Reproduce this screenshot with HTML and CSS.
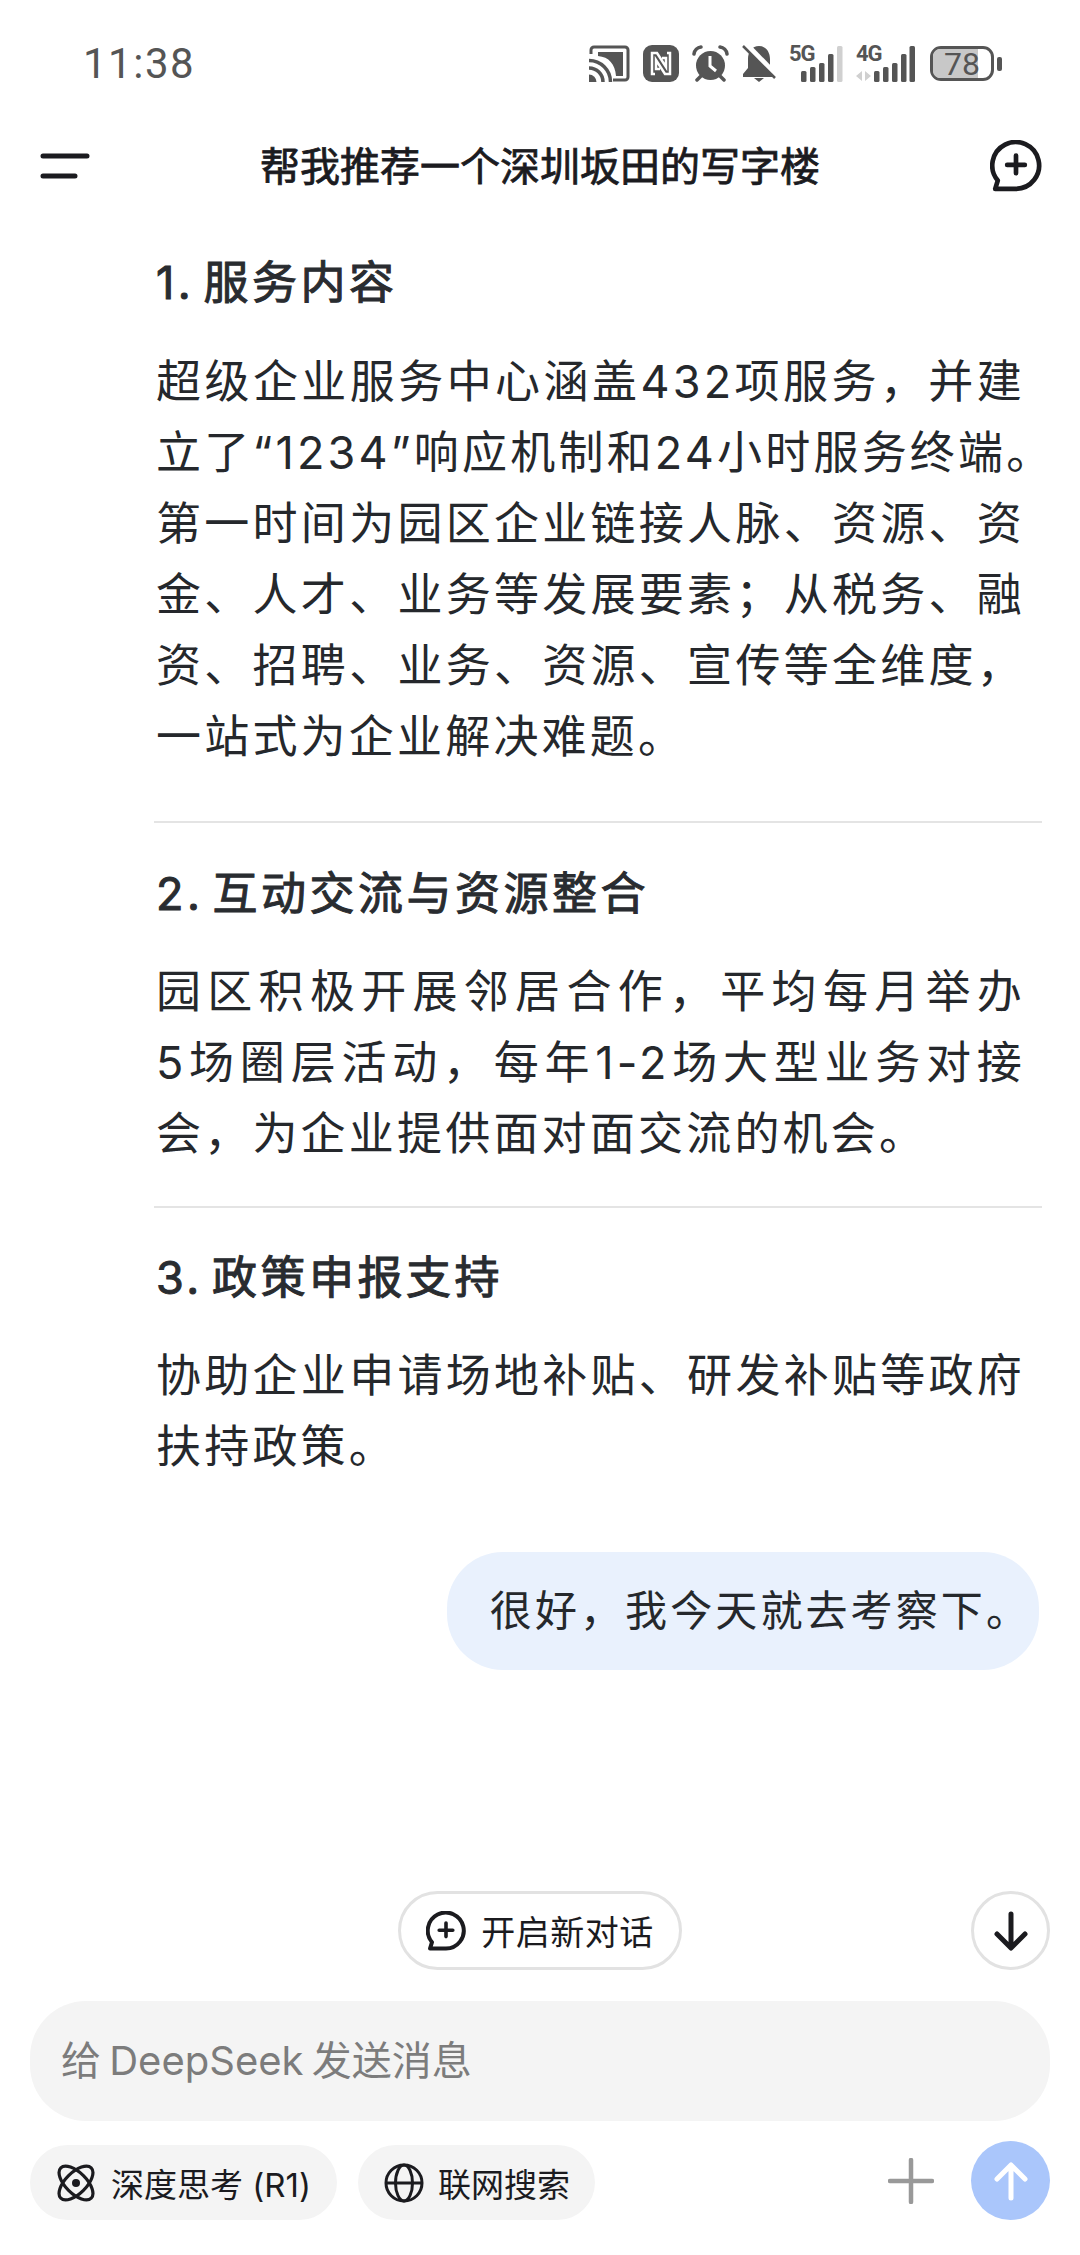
FILE: index.html
```html
<!DOCTYPE html>
<html lang="zh-CN">

<head>
    <meta charset="UTF-8">
    <meta name="viewport" content="width=device-width, initial-scale=1.0">
    <title>DeepSeek</title>
    <link rel="stylesheet" href="styles.css">
</head>

<body>

    <!-- Status bar -->
    <div class="status-bar">
        <span class="status-time">11:38</span>
        <div class="status-icons">
            <svg class="ic-cast" viewBox="0 0 41 37">
                <path d="M2 9V5a3 3 0 0 1 3-3h31a3 3 0 0 1 3 3v27a3 3 0 0 1-3 3H24" fill="none" stroke="#555" stroke-width="3"/>
                <path d="M9 7h25v24H27C26 19 20 12 9 11z" fill="#555"/>
                <path d="M0 15.500A21.500 21.500 0 0 1 21.500 37M0 23A14 14 0 0 1 14 37" fill="none" stroke="#555" stroke-width="3.500"/>
                <path d="M0 29.500a7.500 7.500 0 0 1 7.500 7.500H0z" fill="#555"/>
            </svg>
            <svg class="ic-nfc" viewBox="0 0 36 37">
                <rect width="36" height="37" rx="9" fill="#555"/>
                <path d="M12 29H9V8h5l9 14V13h-4M24 8h3v21h-5l-9-14v9h4" fill="none" stroke="#fff" stroke-width="2.500"/>
            </svg>
            <svg class="ic-alarm" viewBox="0 0 37 37">
                <circle cx="18.500" cy="20.500" r="14.500" fill="#555"/>
                <path d="M2 9a8 8 0 0 1 7-7M35 9a8 8 0 0 0-7-7M5 35l4-4M32 35l-4-4" fill="none" stroke="#555" stroke-width="3.500" stroke-linecap="round"/>
                <path d="M18 11v10l6 5" fill="none" stroke="#fff" stroke-width="3"/>
            </svg>
            <svg class="ic-bell" viewBox="0 0 34 37">
                <path d="M17 1c-7 0-11 6-11 13v9l-5 6v3h32v-3l-5-6v-9c0-7-4-13-11-13z" fill="#555"/>
                <path d="M12 33h10l-5 4z" fill="#555"/>
                <path d="M2 -3l32 33" stroke="#fff" stroke-width="5.500"/>
                <path d="M1 1l32 32" stroke="#555" stroke-width="2.500"/>
            </svg>
            <div class="signal">
                <span class="net-label">5G</span>
                <svg class="ic-bars-5g" viewBox="0 0 54 36">
                    <rect x="12" y="25" width="5.500" height="11" rx="1.500" fill="#555"/>
                    <rect x="21" y="21" width="5.500" height="15" rx="1.500" fill="#555"/>
                    <rect x="30" y="17" width="5.500" height="19" rx="1.500" fill="#555"/>
                    <rect x="39" y="8" width="5.500" height="28" rx="1.500" fill="#555"/>
                    <rect x="48" y="0" width="5.500" height="36" rx="1.500" fill="#d0d0d0"/>
                </svg>
            </div>
            <div class="signal">
                <span class="net-label">4G</span>
                <svg class="ic-bars-4g" viewBox="0 0 59 36">
                    <path d="M6 25l-6 5 6 5zM9 25l6 5-6 5z" fill="#d0d0d0"/>
                    <rect x="18" y="25" width="5.500" height="11" rx="1.500" fill="#555"/>
                    <rect x="27" y="21" width="5.500" height="15" rx="1.500" fill="#555"/>
                    <rect x="36" y="17" width="5.500" height="19" rx="1.500" fill="#555"/>
                    <rect x="45" y="8" width="5.500" height="28" rx="1.500" fill="#555"/>
                    <rect x="53.500" y="0" width="5.500" height="36" rx="1.500" fill="#555"/>
                </svg>
            </div>
            <div class="battery">
                <div class="battery-body">
                    <div class="battery-fill"></div>
                    <span class="battery-level">78</span>
                </div>
                <div class="battery-nub"></div>
            </div>
        </div>
    </div>

    <!-- Title bar -->
    <div class="title-bar">
        <svg class="ic-menu" viewBox="0 0 50 26">
            <path d="M3 3h44M3 23h32" fill="none" stroke="#1b1b1f" stroke-width="5" stroke-linecap="round"/>
        </svg>
        <h1>帮我推荐一个深圳坂田的写字楼</h1>
        <svg class="ic-chat-plus" viewBox="0 0 50 50">
            <path d="M5 47l2.500-8A22.500 22.500 0 1 1 25 47z" fill="none" stroke="#1b1b1f" stroke-width="4.500" stroke-linejoin="round"/>
            <path d="M25 15v17M16.500 24h17" fill="none" stroke="#1b1b1f" stroke-width="4.500" stroke-linecap="round"/>
        </svg>
    </div>

    <!-- Answer -->
    <div class="answer">
        <h3>1. 服务内容</h3>
        <p>
            <span class="fill">超级企业服务中心涵盖432项服务，并建</span>
            <span class="fill">立了“1234”响应机制和24小时服务终端。</span>
            <span class="fill">第一时间为园区企业链接人脉、资源、资</span>
            <span class="fill">金、人才、业务等发展要素；从税务、融</span>
            <span class="fill">资、招聘、业务、资源、宣传等全维度，</span>
            <span class="end">一站式为企业解决难题。</span>
        </p>
        <hr>
        <h3>2. 互动交流与资源整合</h3>
        <p>
            <span class="fill">园区积极开展邻居合作，平均每月举办</span>
            <span class="fill">5场圈层活动，每年1-2场大型业务对接</span>
            <span class="end">会，为企业提供面对面交流的机会。</span>
        </p>
        <hr class="sep-tight">
        <h3>3. 政策申报支持</h3>
        <p>
            <span class="fill">协助企业申请场地补贴、研发补贴等政府</span>
            <span class="end">扶持政策。</span>
        </p>
    </div>

    <div class="user-row">
        <div class="user-bubble">很好，我今天就去考察下。</div>
    </div>

    <!-- Bottom controls -->
    <div class="composer">
        <div class="float-row">
            <button class="new-chat">
                <svg class="ic-chat-small" viewBox="0 0 50 50">
                    <path d="M5 47l2.500-8A22.500 22.500 0 1 1 25 47z" fill="none" stroke="#1b1b1f" stroke-width="5" stroke-linejoin="round"/>
                    <path d="M25 15v17M16.500 24h17" fill="none" stroke="#1b1b1f" stroke-width="4.500" stroke-linecap="round"/>
                </svg>
                开启新对话
            </button>
            <button class="scroll-down">
                <svg viewBox="0 0 34 40">
                    <path d="M17 3v33M3 23l14 14 14-14" fill="none" stroke="#1b1b1f" stroke-width="5" stroke-linecap="round" stroke-linejoin="round"/>
                </svg>
            </button>
        </div>
        <div class="input-box">给 DeepSeek 发送消息</div>
        <div class="tool-row">
            <button class="chip chip-think">
                <svg class="ic-chip" viewBox="0 0 38 38">
                    <ellipse cx="19" cy="19" rx="10.500" ry="21.500" transform="rotate(-45 19 19)" fill="none" stroke="#1b1b1f" stroke-width="3.200"/>
                    <ellipse cx="19" cy="19" rx="10.500" ry="21.500" transform="rotate(45 19 19)" fill="none" stroke="#1b1b1f" stroke-width="3.200"/>
                    <circle cx="19" cy="19" r="4" fill="#1b1b1f"/>
                </svg>
                深度思考 (R1)
            </button>
            <button class="chip chip-search">
                <svg class="ic-chip" viewBox="0 0 40 40">
                    <circle cx="20" cy="20" r="18" fill="none" stroke="#1b1b1f" stroke-width="3"/>
                    <ellipse cx="20" cy="20" rx="8.500" ry="18" fill="none" stroke="#1b1b1f" stroke-width="3"/>
                    <path d="M2 20h36" stroke="#1b1b1f" stroke-width="3"/>
                </svg>
                联网搜索
            </button>
            <svg class="ic-plus" viewBox="0 0 46 46">
                <path d="M23 2v42M2 23h42" fill="none" stroke="#999" stroke-width="4.500" stroke-linecap="round"/>
            </svg>
            <button class="send">
                <svg viewBox="0 0 34 40">
                    <path d="M17 37V4M3 18L17 4l14 14" fill="none" stroke="#fff" stroke-width="5" stroke-linecap="round" stroke-linejoin="round"/>
                </svg>
            </button>
        </div>
    </div>

</body>

</html>
```

FILE: styles.css
```css
/* Theme */
:root {
    --ink: #1b1b1f;
    --body-ink: #25282c;
    --icon-gray: #555;
    --line: #e4e4e4;
    --soft-bg: #f4f4f4;
}

* {
    box-sizing: border-box;
}

body {
    font-family: Inter, "Noto Sans CJK SC", sans-serif;
    background: #fff;
    color: var(--body-ink);
    margin: 0;
    width: 1080px;
    height: 2255px;
    overflow: hidden;
    display: flex;
    flex-direction: column;
}

button {
    font-family: inherit;
    border: none;
    padding: 0;
    color: var(--ink);
}

/* Status bar */
.status-bar {
    height: 126px;
    padding: 45px 78px 0 83px;
    display: flex;
    justify-content: space-between;
    align-items: flex-start;
}

.status-time {
    font-family: Roboto, sans-serif;
    font-size: 42px;
    line-height: 38px;
    letter-spacing: 1.5px;
    color: var(--icon-gray);
}

.status-icons {
    display: flex;
    align-items: flex-start;
    gap: 13px;
}

.status-icons svg {
    display: block;
}

.ic-cast { width: 41px; height: 37px; }
.ic-nfc { width: 36px; height: 37px; }
.ic-alarm { width: 37px; height: 37px; }
.ic-bell { width: 34px; height: 37px; }
.ic-bars-5g { width: 54px; height: 36px; }
.ic-bars-4g { width: 59px; height: 36px; }

.signal {
    position: relative;
    margin-top: 1px;
}

.net-label {
    position: absolute;
    left: 0;
    top: -3px;
    font-family: Roboto, sans-serif;
    font-size: 22px;
    line-height: 22px;
    font-weight: 700;
    letter-spacing: -1px;
    color: var(--icon-gray);
}

.battery {
    display: flex;
    align-items: center;
    gap: 3px;
    margin: 1px 0 0 2px;
}

.battery-body {
    position: relative;
    width: 64px;
    height: 35px;
    border: 3.500px solid var(--icon-gray);
    border-radius: 11px;
    display: flex;
    align-items: center;
    justify-content: center;
}

.battery-fill {
    position: absolute;
    left: 0;
    top: 0;
    bottom: 0;
    width: 78%;
    border-radius: 7px 0 0 7px;
    background: #c8c8c8;
}

.battery-level {
    position: relative;
    font-family: Roboto, sans-serif;
    font-size: 32px;
    line-height: 28px;
    color: var(--icon-gray);
}

.battery-nub {
    width: 5px;
    height: 14px;
    border-radius: 2px;
    background: var(--icon-gray);
}

/* Title bar */
.title-bar {
    height: 80px;
    padding: 0 38px 0 40px;
    display: flex;
    align-items: center;
    justify-content: space-between;
}

.title-bar h1 {
    margin: 0;
    padding-bottom: 5px;
    font-size: 40px;
    font-weight: 400;
    -webkit-text-stroke: 0.8px var(--ink);
    color: var(--ink);
}

.ic-menu {
    width: 50px;
    height: 26px;
}

.ic-chat-plus {
    width: 52px;
    height: 52px;
}

/* Answer */
.answer {
    padding: 41px 38px 0 154px;
}

.answer h3 {
    margin: 0 0 0 2px;
    font-size: 45px;
    line-height: 72px;
    font-weight: 400;
    -webkit-text-stroke: 1px #292c30;
    letter-spacing: 3.5px;
    word-spacing: -7px;
    color: #292c30;
}

.answer p {
    margin: 26.5px 0 0 2px;
    font-size: 45px;
    line-height: 71px;
    letter-spacing: 3.2px;
    white-space: nowrap;
}

.answer p span {
    display: block;
}

/* lines stretch to the column edge, the closing line does not */
.answer p .fill {
    width: 869px;
    text-align: justify;
    text-align-last: justify;
}

.answer hr {
    border: none;
    height: 2px;
    background: var(--line);
    margin: 49px 0 35px;
}

.answer hr.sep-tight {
    margin: 36.5px 0 34px;
}

/* User message */
.user-row {
    display: flex;
    justify-content: flex-end;
    padding: 70px 41px 0 0;
}

.user-bubble {
    height: 118px;
    padding: 0 8px 0 43px;
    border-radius: 56px;
    background: #e9f1fd;
    font-size: 42px;
    letter-spacing: 3.1px;
    line-height: 118px;
}

/* Bottom controls */
.composer {
    margin-top: auto;
    padding: 0 30px 35px;
}

.float-row {
    display: grid;
    grid-template-columns: 1fr auto 1fr;
    align-items: center;
    height: 79px;
}

.new-chat {
    grid-column: 2;
    height: 79px;
    width: 284px;
    border: 3px solid #e2e2e2;
    border-radius: 40px;
    background: #fff;
    font-size: 34px;
    letter-spacing: 0.5px;
    display: flex;
    align-items: center;
    justify-content: center;
    gap: 15px;
}

.ic-chat-small {
    width: 40px;
    height: 40px;
}

.scroll-down {
    grid-column: 3;
    justify-self: end;
    width: 79px;
    height: 79px;
    border: 3px solid #e2e2e2;
    border-radius: 50%;
    background: #fff;
    display: flex;
    align-items: center;
    justify-content: center;
}

.scroll-down svg,
.send svg {
    width: 34px;
    height: 40px;
}

.input-box {
    margin-top: 31px;
    height: 120px;
    padding-left: 31px;
    border-radius: 56px;
    background: var(--soft-bg);
    font-size: 40px;
    word-spacing: -3px;
    line-height: 120px;
    color: #7c7c7c;
}

.tool-row {
    margin-top: 20px;
    display: flex;
    align-items: flex-end;
    gap: 21px;
}

.chip {
    height: 75px;
    padding: 0 25px 0 26px;
    border-radius: 38px;
    background: var(--soft-bg);
    font-size: 33px;
    display: flex;
    align-items: center;
    gap: 14px;
}

.chip-think {
    padding-left: 27px;
    gap: 16px;
    width: 307px;
    white-space: nowrap;
}

.ic-chip {
    width: 38px;
    height: 38px;
}

.chip-search .ic-chip {
    width: 40px;
    height: 40px;
}

.ic-plus {
    width: 46px;
    height: 46px;
    margin: 0 16px 16px auto;
}

.send {
    width: 79px;
    height: 79px;
    border-radius: 50%;
    background: #aac6fb;
    display: flex;
    align-items: center;
    justify-content: center;
}
```
